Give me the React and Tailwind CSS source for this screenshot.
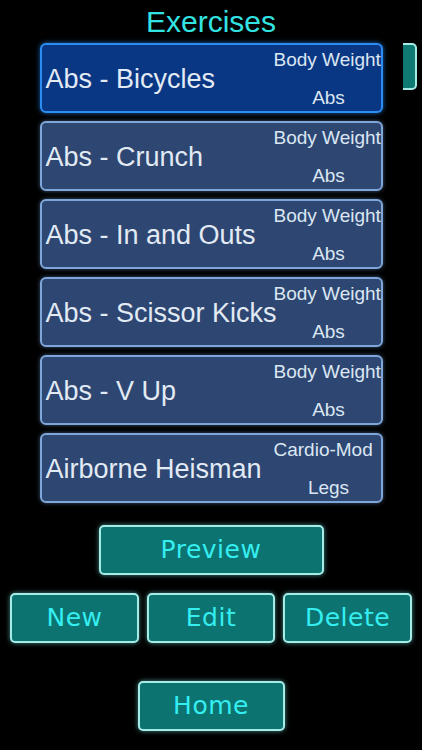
import React from "react";

const rows = [
  { name: "Abs - Bicycles", cat: "Body Weight", part: "Abs", selected: true },
  { name: "Abs - Crunch", cat: "Body Weight", part: "Abs" },
  { name: "Abs - In and Outs", cat: "Body Weight", part: "Abs" },
  { name: "Abs - Scissor Kicks", cat: "Body Weight", part: "Abs" },
  { name: "Abs - V Up", cat: "Body Weight", part: "Abs" },
  { name: "Airborne Heisman", cat: "Cardio-Mod", part: "Legs" },
];

function Btn({ children, className }) {
  return (
    <div
      className={
        "flex h-[50px] items-center justify-center rounded-[5px] border-2 border-[#a6ece6] bg-[#0c7371] text-[25px] tracking-[0.5px] text-[#35eef0] shadow-[0_0_5px_rgba(120,230,225,0.6)] " +
        className
      }
      style={{ fontFamily: '"DejaVu Sans", sans-serif' }}
    >
      {children}
    </div>
  );
}

export default function App() {
  return (
    <div
      className="relative flex h-[750px] w-[422px] flex-col items-center overflow-hidden bg-black"
      style={{ fontFamily: '"Liberation Sans", Arial, sans-serif' }}
    >
      <div className="mt-[4px] h-[37px] text-[30px] leading-[36px] text-[#33e3e3]">Exercises</div>
      <div className="absolute left-[403px] top-[43px] h-[47px] w-[14px] rounded-r-[5px] border-2 border-l-0 border-[#a6ece6] bg-[#0f7a72]" />
      <div className="mt-[2px] flex w-[343px] flex-col gap-[8px]">
        {rows.map((r) => (
          <div
            key={r.name}
            className={
              "flex h-[70px] items-center rounded-[6px] border-2 " +
              (r.selected
                ? "border-[#2b8cf2] bg-[#0a3784] shadow-[0_0_5px_rgba(40,140,255,0.7)]"
                : "border-[#7ea6d8] bg-[#2d4672] shadow-[0_0_4px_rgba(120,170,230,0.5)]")
            }
          >
            <div className="min-w-0 flex-1 whitespace-nowrap pl-[4px] pt-[2px] text-[27px] text-[#e2eaf4]">{r.name}</div>
            <div className="mr-[-4px] flex h-full w-[112px] shrink-0 flex-col items-center justify-between whitespace-nowrap pb-[1px] pt-[3px] text-[19px] leading-[24px] text-[#dbe6f2]">
              <span className="self-start pl-[1px]">{r.cat}</span>
              <span>{r.part}</span>
            </div>
          </div>
        ))}
      </div>
      <Btn className="mt-[22px] w-[225px]">Preview</Btn>
      <div className="mt-[18px] flex w-[402px] gap-[8px]">
        <Btn className="w-[129px]">New</Btn>
        <Btn className="w-[128px]">Edit</Btn>
        <Btn className="w-[129px]">Delete</Btn>
      </div>
      <Btn className="mt-[38px] w-[147px]">Home</Btn>
    </div>
  );
}
